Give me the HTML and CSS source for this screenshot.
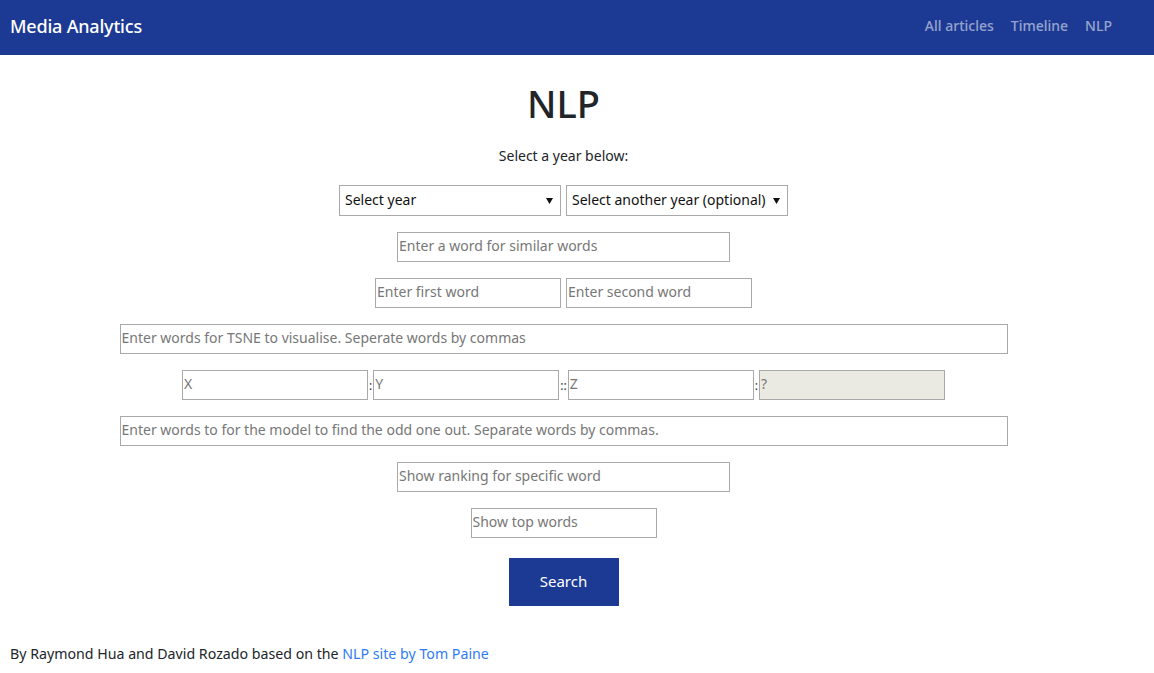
FILE: index.html
```html
<!DOCTYPE html>
<html>
<head>
<meta charset="utf-8">
<title>Media Analytics - NLP</title>
<link rel="stylesheet" href="styles.css">
</head>
<body>
<nav class="navbar">
  <a class="brand" href="#">Media Analytics</a>
  <ul class="nav-links">
    <li><a href="#">All articles</a></li>
    <li><a href="#">Timeline</a></li>
    <li><a href="#">NLP</a></li>
  </ul>
</nav>
<main class="content">
  <h1 class="title">NLP</h1>
  <p class="lead">Select a year below:</p>
  <form class="form">
    <div class="row">
      <select class="select select-year"><option>Select year</option></select>
      <select class="select select-other"><option>Select another year (optional)</option></select>
    </div>
    <div class="row">
      <input class="field w-md" type="text" placeholder="Enter a word for similar words">
    </div>
    <div class="row">
      <input class="field w-sm" type="text" placeholder="Enter first word">
      <input class="field w-sm" type="text" placeholder="Enter second word">
    </div>
    <div class="row">
      <input class="field w-lg" type="text" placeholder="Enter words for TSNE to visualise. Seperate words by commas">
    </div>
    <div class="row analogy">
      <input class="field w-sm" type="text" placeholder="X">
      <span class="sep">:</span>
      <input class="field w-sm" type="text" placeholder="Y">
      <span class="sep">::</span>
      <input class="field w-sm" type="text" placeholder="Z">
      <span class="sep">:</span>
      <input class="field w-sm" type="text" placeholder="?" disabled>
    </div>
    <div class="row">
      <input class="field w-lg" type="text" placeholder="Enter words to for the model to find the odd one out. Separate words by commas.">
    </div>
    <div class="row">
      <input class="field w-md" type="text" placeholder="Show ranking for specific word">
    </div>
    <div class="row">
      <input class="field w-sm" type="text" placeholder="Show top words">
    </div>
    <div class="row button-row">
      <button class="btn" type="button">Search</button>
    </div>
  </form>
</main>
<footer class="footer">
  By Raymond Hua and David Rozado based on the <a href="#">NLP site by Tom Paine</a>
</footer>
</body>
</html>
```

FILE: styles.css
```css
* { box-sizing: border-box; }
html, body { margin: 0; padding: 0; }
body {
  font-family: "Noto Sans", "Open Sans", sans-serif;
  font-size: 14px;
  color: #212529;
  background: #fff;
  width: 1154px;
}
.navbar {
  background: #1c3a94;
  height: 55px;
  display: flex;
  align-items: center;
  justify-content: space-between;
  padding: 0 42px 4px 10px;
}
.brand {
  color: #fff;
  text-decoration: none;
  font-size: 18px;
  font-weight: 500;
  letter-spacing: -0.2px;
}
.nav-links {
  list-style: none;
  margin: 0;
  padding: 0;
  display: flex;
  gap: 17px;
}
.nav-links a {
  color: rgba(255,255,255,0.55);
  text-decoration: none;
  font-size: 14px;
  font-weight: 500;
}
.content {
  width: 1127px;
  text-align: center;
  padding-top: 24px;
}
.title {
  font-size: 38px;
  font-weight: 500;
  margin: 0;
  line-height: 48px;
}
.lead {
  margin: 17px 0 0;
  line-height: 24px;
}
.form {
  margin-top: 17px;
  display: flex;
  flex-direction: column;
  align-items: center;
  gap: 16px;
}
.row {
  display: flex;
  justify-content: center;
  align-items: center;
  gap: 5px;
}
.select {
  appearance: none;
  -webkit-appearance: none;
  height: 31px;
  width: 222px;
  border: 1px solid #a9a9a9;
  border-radius: 0;
  background: #fff url("data:image/svg+xml;utf8,<svg xmlns='http://www.w3.org/2000/svg' width='8' height='8'><path d='M0 1h7L3.5 7z' fill='%23111'/></svg>") no-repeat right 6px center;
  font-family: inherit;
  font-size: 14px;
  color: #111;
  padding: 0 14px 2px 5px;
}
.field {
  height: 30px;
  border: 1px solid #a9a9a9;
  border-radius: 0;
  padding: 0 1px 3px;
  font-family: inherit;
  font-size: 14px;
  color: #212529;
  background: #fff;
}
.field::placeholder { color: #777; }
.field:disabled { background: #eae9e2; }
.w-sm { width: 186px; }
.w-md { width: 333px; }
.w-lg { width: 888px; }
.analogy { gap: 0; }
.sep { font-size: 12px; color: #333; padding: 0 1px; }
.button-row { margin-top: 4px; }
.btn {
  width: 110px;
  height: 48px;
  background: #1c3a94;
  color: #fff;
  border: none;
  border-radius: 0;
  font-family: inherit;
  font-size: 15px;
  padding: 0 0 3px;
}
.footer {
  padding: 38px 10px 0;
  font-size: 14.2px;
  line-height: 20px;
}
.footer a { color: #2f7bf5; text-decoration: none; }
```
